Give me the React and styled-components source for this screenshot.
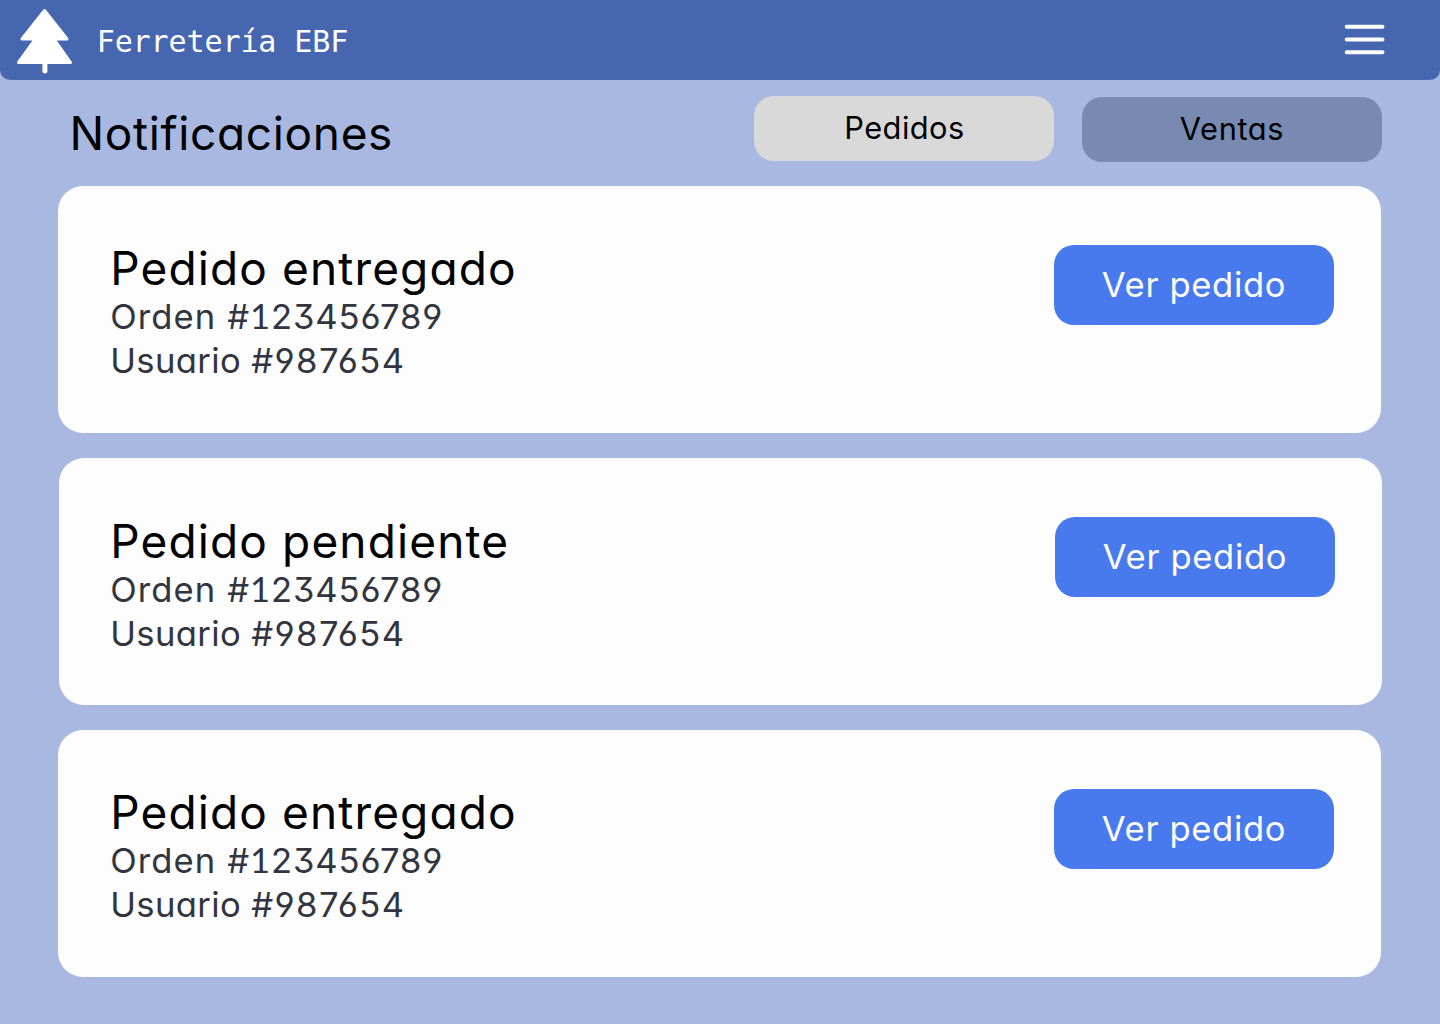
import React from 'react';
import styled, { createGlobalStyle } from 'styled-components';

const GlobalStyle = createGlobalStyle`
  *, *::before, *::after { box-sizing: border-box; }
  body {
    margin: 0;
    background: #a8b8e1;
    font-family: Inter, "Noto Sans", sans-serif;
    font-feature-settings: "cv11", "cv03", "cv04", "cv09";
  }
  h1, h2, p { margin: 0; font-weight: 400; }
  button { font: inherit; font-feature-settings: inherit; border: 0; padding: 0; cursor: pointer; }
`;

const Page = styled.div`
  min-height: 1024px;
  background: #a8b8e1;
`;

const Header = styled.header`
  display: flex;
  align-items: flex-start;
  justify-content: space-between;
  height: 80px;
  padding: 0 48px 0 12px;
  background: #4666af;
  border-radius: 0 0 10px 10px;
`;

const Brand = styled.div`
  display: flex;
  align-items: center;
  height: 80px;
`;

const TreeIcon = styled.svg`
  width: 66px;
  height: 80px;
  flex: none;
`;

const BrandName = styled.span`
  margin: 3px 0 0 18.7px;
  color: #fff;
  font: 400 30px/44px "DejaVu Sans Mono", monospace;
  letter-spacing: -0.1px;
  white-space: pre;
`;

const MenuButton = styled.button`
  width: 56px;
  height: 80px;
  background: transparent;

  svg { display: block; width: 56px; height: 80px; }
`;

const Toolbar = styled.section`
  display: flex;
  align-items: flex-start;
  height: 106px;
  padding: 16px 58px 0 69.5px;
`;

const Title = styled.h1`
  flex: 1;
  padding-top: 9px;
  font-size: 46px;
  line-height: 56px;
  letter-spacing: 0.66px;
`;

const Tabs = styled.div`
  display: flex;
  gap: 28px;
`;

const Tab = styled.button`
  width: 300px;
  height: 65px;
  margin-top: ${(p) => (p.$active ? 0 : 1)}px;
  padding: 0 0 3px ${(p) => (p.$active ? 1 : 0)}px;
  border-radius: 20px;
  background: ${(p) => (p.$active ? '#d9d9d9' : '#788ab1')};
  color: #000;
  font-size: 30.8px;
  letter-spacing: ${(p) => (p.$active ? 0.45 : 0.63)}px;
`;

const List = styled.main`
  display: flex;
  flex-direction: column;
  gap: 25px;
  padding: 0 58px;
`;

const Card = styled.article`
  display: flex;
  justify-content: space-between;
  align-items: flex-start;
  width: 1323px;
  height: 247px;
  margin-left: ${(p) => (p.$shifted ? 1 : 0)}px;
  padding: ${(p) => (p.$shifted ? '55px 47px 0 51.2px' : '54px 47px 0 52.2px')};
  border-radius: 25px;
  background: #fdfdfd;
`;

const CardTitle = styled.h2`
  margin-bottom: -2px;
  color: #000;
  font-size: 46px;
  line-height: 56px;
  letter-spacing: ${(p) => p.$tracking}px;
`;

const Detail = styled.p`
  color: #32343f;
  font-size: 34.6px;
  line-height: 44px;
  letter-spacing: ${(p) => p.$tracking}px;
`;

const Code = styled.span`
  letter-spacing: ${(p) => p.$tracking}px;
`;

const FootedOne = styled.span`
  font-family: Lato, sans-serif;
  line-height: 1;
`;

const ViewButton = styled.button`
  width: 280px;
  height: 80px;
  margin-top: ${(p) => (p.$shifted ? 4 : 5)}px;
  padding-bottom: 3px;
  border-radius: 20px;
  background: #487aed;
  color: #fdfdfd;
  font-size: 34.6px;
  letter-spacing: 0.66px;
`;

const orders = [
  { id: 1, title: 'Pedido entregado', tracking: 1.13 },
  { id: 2, title: 'Pedido pendiente', tracking: 1.14, shifted: true },
  { id: 3, title: 'Pedido entregado', tracking: 1.13 },
];

function OrderCard({ title, tracking, shifted }) {
  return (
    <Card $shifted={shifted}>
      <div>
        <CardTitle $tracking={tracking}>{title}</CardTitle>
        <Detail $tracking={1.1}>
          Orden <Code $tracking={0.9}>#<FootedOne>1</FootedOne>23456789</Code>
        </Detail>
        <Detail $tracking={0.37}>
          Usuario <Code $tracking={1.45}>#987654</Code>
        </Detail>
      </div>
      <ViewButton $shifted={shifted}>Ver pedido</ViewButton>
    </Card>
  );
}

export default function App() {
  return (
    <Page>
      <GlobalStyle />
      <Header>
        <Brand>
          <TreeIcon viewBox="12 0 66 80" fill="#fff" stroke="#fff" strokeLinejoin="round" strokeLinecap="round">
            <path strokeWidth="3" d="M44.5 10.5 67 39H54L70.500 62.500H18.500L35.500 39H22Z" />
            <path strokeWidth="5" d="M44.900 62V71" />
          </TreeIcon>
          <BrandName>Ferretería EBF</BrandName>
        </Brand>
        <MenuButton aria-label="Menú">
          <svg viewBox="1336 0 56 80" stroke="#fff" strokeWidth="4" strokeLinecap="round">
            <path d="M1346.700 26.700H1382.500M1346.700 39.500H1382.500M1346.700 52.200H1382.500" />
          </svg>
        </MenuButton>
      </Header>
      <Toolbar>
        <Title>Notificaciones</Title>
        <Tabs>
          <Tab $active>Pedidos</Tab>
          <Tab>Ventas</Tab>
        </Tabs>
      </Toolbar>
      <List>
        {orders.map((o) => (
          <OrderCard key={o.id} {...o} />
        ))}
      </List>
    </Page>
  );
}
